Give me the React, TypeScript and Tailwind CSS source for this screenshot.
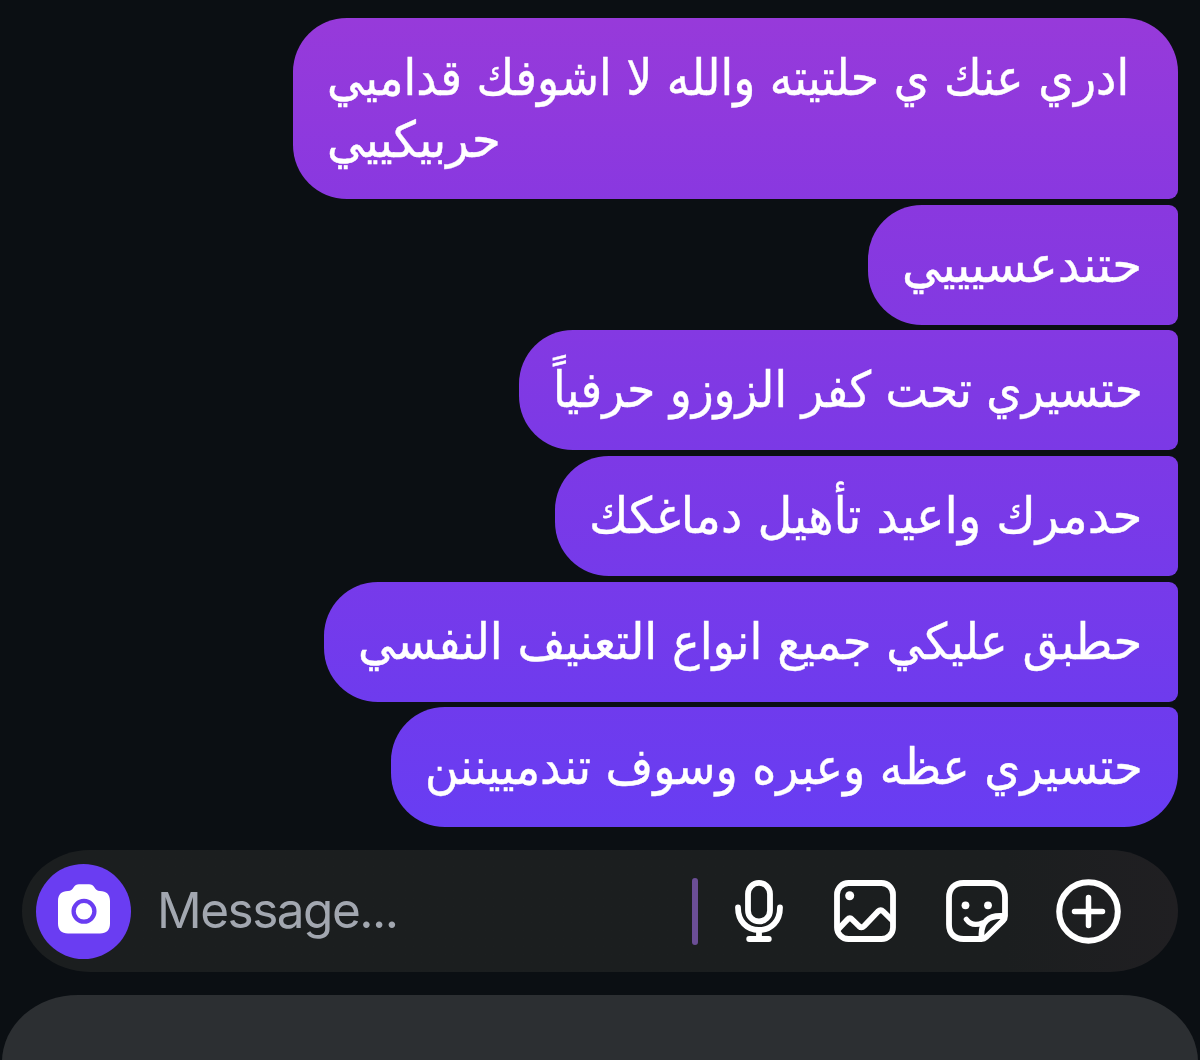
type Line = { text: string; stretch: string };
type Bubble = { lines: Line[]; box: string };

const bubbles: Bubble[] = [
  {
    lines: [
      { text: "ادري عنك ي حلتيته والله لا اشوفك قداميي", stretch: "scale-x-[1.017]" },
      { text: "حربيكييي", stretch: "scale-x-[1.032]" },
    ],
    box: "h-[181.500px] w-[885px] rounded-tr-[54px] rounded-br-[9px] from-[#973ada] to-[#8938e0]",
  },
  {
    lines: [{ text: "حتندعسيييي", stretch: "scale-x-[1.073]" }],
    box: "h-[120px] w-[310px] rounded-r-[9px] from-[#8a38df] to-[#8239e2]",
  },
  {
    lines: [{ text: "حتسيري تحت كفر الزوزو حرفياً", stretch: "scale-x-[1.009]" }],
    box: "h-[120px] w-[659px] rounded-r-[9px] from-[#8439e2] to-[#7b39e6]",
  },
  {
    lines: [{ text: "حدمرك واعيد تأهيل دماغكك", stretch: "scale-x-[1.064]" }],
    box: "h-[120px] w-[623px] rounded-r-[9px] from-[#7d39e6] to-[#753aea]",
  },
  {
    lines: [{ text: "حطبق عليكي جميع انواع التعنيف النفسي", stretch: "scale-x-[1.033]" }],
    box: "h-[120px] w-[854px] rounded-r-[9px] from-[#773aea] to-[#6e3bee]",
  },
  {
    lines: [{ text: "حتسيري عظه وعبره وسوف تندمييننن", stretch: "scale-x-[1.022]" }],
    box: "h-[120px] w-[787px] rounded-tr-[9px] rounded-br-[54px] from-[#6f3bed] to-[#683df3]",
  },
];

function MessageBubble({ lines, box }: Bubble) {
  return (
    <div
      className={
        "flex flex-col items-start rounded-l-[54px] bg-linear-to-b pt-[29px] pl-[34px] font-['DejaVu_Sans_Condensed','DejaVu_Sans',sans-serif] text-[50px] leading-[62px] whitespace-nowrap text-white [-webkit-text-stroke:0.4px_white] " +
        box
      }
    >
      {lines.map((line) => (
        <p key={line.text} dir="rtl" className={"origin-left " + line.stretch}>
          {line.text}
        </p>
      ))}
    </div>
  );
}

function CameraIcon() {
  return (
    <svg className="h-[50px] w-[52px]" viewBox="0 0 52 50">
      <path
        fill="#fff"
        d="M10 7 C13 7 14 5.500 15.500 3.500 C17 1 18.500 0.300 21 0.300 H31 C33.500 0.300 35 1 36.500 3.500 C38 5.500 39 7 42 7 C48.500 7 52 10.500 52 17 V39.500 C52 46 48.500 49.500 42 49.500 H10 C3.500 49.500 0 46 0 39.500 V17 C0 10.500 3.500 7 10 7 Z"
      />
      <circle cx="26" cy="27.300" r="10.400" fill="none" stroke="#6a3df2" strokeWidth="4.300" />
    </svg>
  );
}

function MicIcon() {
  return (
    <svg className="h-[66px] w-[50px]" viewBox="0 0 50 66" fill="none" stroke="#fff" strokeWidth="5.800" strokeLinecap="round">
      <rect x="14" y="4.900" width="22" height="38.500" rx="11" />
      <path d="M4 29.500 C4 43 12.500 52 25 52 C37.500 52 46 43 46 29.500 M25 52 V61 M15.200 61 H34.800" />
    </svg>
  );
}

function PhotoIcon() {
  return (
    <svg className="size-[62px]" viewBox="0 0 62 62" fill="none" stroke="#fff" strokeWidth="5.800" strokeLinejoin="round">
      <rect x="3" y="3" width="56" height="56" rx="11.500" />
      <circle cx="15.700" cy="15.700" r="4.500" fill="#fff" stroke="none" />
      <path d="M4 49.500 L13.500 39.500 Q15.800 37 18.200 39.500 L24.900 46 Q27.600 48.500 30.200 46 L44 31.500 Q46.700 29 49.300 31.500 L59 41" />
    </svg>
  );
}

function StickerIcon() {
  return (
    <svg
      className="size-[62px]"
      viewBox="0 0 62 62"
      fill="none"
      stroke="#fff"
      strokeWidth="5.800"
      strokeLinecap="round"
      strokeLinejoin="round"
    >
      <path d="M35.500 59 H17.500 C8.500 59 3 53.500 3 44.500 V17.500 C3 8.500 8.500 3 17.500 3 H44.500 C53.500 3 59 8.500 59 17.500 V36 C59 38 58.300 39.300 57 40.600 L40 57.300 C38.800 58.500 37.500 59 35.500 59 Z" />
      <path d="M58 36 H54 C42.500 36 35.500 42.500 35.500 54 V58" />
      <path strokeWidth="5.200" d="M20.300 39.300 C23.500 43.800 29 46 36.500 43" />
      <circle cx="19.500" cy="25.300" r="3.900" fill="#fff" stroke="none" />
      <circle cx="42" cy="25.300" r="3.900" fill="#fff" stroke="none" />
    </svg>
  );
}

function PlusIcon() {
  return (
    <svg className="size-[65px]" viewBox="0 0 65 65" fill="none" stroke="#fff" strokeWidth="6" strokeLinecap="round">
      <circle cx="32.500" cy="32.500" r="29.300" />
      <path strokeWidth="5.500" d="M32.500 18.500 V46.500 M18.500 32.500 H46.500" />
    </svg>
  );
}

export default function App() {
  return (
    <div className="flex h-[1060px] w-[1200px] flex-col overflow-hidden bg-[#0b0f13]">
      <main className="flex flex-col items-end gap-[5.700px] pt-[17.500px] pr-[22px]">
        {bubbles.map((b) => (
          <MessageBubble key={b.box} {...b} />
        ))}
      </main>

      <div className="mx-[22px] mt-[22.500px] flex h-[122px] shrink-0 items-center rounded-[68px/61px] bg-linear-to-r from-[#1b1e1f] from-85% to-[#201f22] pt-px pl-[14px]">
        <button className="flex size-[95px] items-center justify-center rounded-full bg-[#6a3df2] pb-[5px]">
          <CameraIcon />
        </button>
        <span className="ml-[26px] w-[535px] pb-[3px] font-[Inter] text-[49.500px] tracking-[-1.500px] text-[#a2a7b0]">
          Message...
        </span>
        <span className="h-[67px] w-[6px] rounded-full bg-[#6b4e96]" />
        <div className="ml-[36px] flex items-center">
          <MicIcon />
          <div className="ml-[50px]">
            <PhotoIcon />
          </div>
          <div className="ml-[50px]">
            <StickerIcon />
          </div>
          <div className="ml-[48px]">
            <PlusIcon />
          </div>
        </div>
      </div>

      <div className="mx-[2px] mt-[23px] h-[90px] shrink-0 bg-[#2c2f32] [border-top-left-radius:76px_67px] [border-top-right-radius:76px_67px]" />
    </div>
  );
}
